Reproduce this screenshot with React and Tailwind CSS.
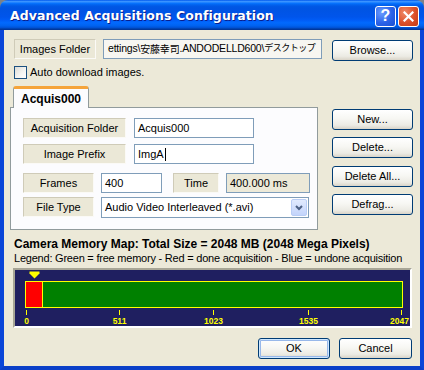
import React from "react";

const btn =
  "flex items-center justify-center rounded-[3px] border border-[#003c74] bg-[linear-gradient(180deg,#ffffff_0%,#f7f7f3_45%,#ecebe4_80%,#d9d4c8_100%)] text-[11px] text-black";

function Label({ w, children }) {
  return (
    <div
      className={`flex h-[20px] ${w} items-center justify-center border border-[#cfcbb8] border-b-[#fbfaf6] border-r-[#fbfaf6] bg-[#ebe8d7] text-[11px]`}
    >
      {children}
    </div>
  );
}

function Field({ w, children, className = "" }) {
  return (
    <div
      className={`flex h-[20px] ${w} items-center border border-[#7f9db9] bg-white px-[3px] text-[11px] ${className}`}
    >
      {children}
    </div>
  );
}

function MemoryMap() {
  const ticks = [
    { x: 11, t: "0" },
    { x: 104, t: "511" },
    { x: 198, t: "1023" },
    { x: 293, t: "1535" },
    { x: 386, t: "2047" },
  ];
  return (
    <svg width="395" height="56" viewBox="0 0 395 56">
      <rect x="0" y="0" width="395" height="56" fill="#1f1f60" />
      <polygon points="14.5,1.5 24.5,1.5 24.5,3.5 19.5,8.5 14.5,3.5" fill="#ffff00" />
      <rect x="10.5" y="11.5" width="377" height="26" fill="#008000" stroke="#ffff00" />
      <rect x="10.5" y="11.5" width="17" height="26" fill="#ff0000" stroke="#ffff00" />
      {ticks.map((k) => (
        <g key={k.t}>
          <rect x={k.x} y="40" width="1" height="5" fill="#ffff00" />
          <text
            x={k.t === "2047" ? 394 : k.x + 0.5}
            y="54"
            textAnchor={k.t === "2047" ? "end" : "middle"}
            fill="#ffff00"
            fontSize="8.5"
            fontWeight="bold"
            fontFamily="'Liberation Sans', sans-serif"
          >
            {k.t}
          </text>
        </g>
      ))}
    </svg>
  );
}

export default function App() {
  return (
    <div className="h-[370px] w-[424px] bg-[#7d8288] font-['Liberation_Sans','Noto_Sans_CJK_JP',sans-serif] text-[11px] text-black">
      <div className="flex h-full flex-col overflow-hidden rounded-t-[8px]">
        {/* Title bar */}
        <div className="flex h-[30px] shrink-0 items-center bg-[linear-gradient(180deg,#0058ee_0%,#3a93ff_5%,#1c80ff_9%,#036ffc_12%,#0262ee_16%,#0057e5_22%,#0054e3_30%,#0055eb_56%,#005bf5_66%,#026afe_76%,#0062ef_86%,#0052d6_92%,#0040ab_96%,#003092_100%)] pl-[10px] pr-[5px] pt-[2px]">
          <span className="font-['DejaVu_Sans',sans-serif] text-[12.5px] font-bold tracking-[0.1px] text-white [text-shadow:1px_1px_0_#0a1e8c]">
            Advanced Acquisitions Configuration
          </span>
          <div className="ml-auto flex gap-[2px]">
            <div className="flex h-[21px] w-[21px] items-center justify-center rounded-[3px] border border-white bg-[radial-gradient(circle_at_30%_30%,#6b9cff_0%,#2b63e8_55%,#1c4fd1_100%)] font-['Liberation_Sans',sans-serif] text-[16px] font-bold leading-none text-white">
              ?
            </div>
            <div className="flex h-[21px] w-[21px] items-center justify-center rounded-[3px] border border-white bg-[radial-gradient(circle_at_30%_30%,#f08a68_0%,#dc4f28_55%,#c23b16_100%)]">
              <svg width="11" height="11" viewBox="0 0 11 11">
                <path d="M1.5 1.5 L9.5 9.5 M9.5 1.5 L1.5 9.5" stroke="white" strokeWidth="2.2" strokeLinecap="square" />
              </svg>
            </div>
          </div>
        </div>

        {/* Client area */}
        <div className="flex flex-1 flex-col border-x-4 border-b-4 border-x-[#0a46d8] border-b-[#0a3fc8] bg-[#ece9d8] pl-[6px] pr-[7px] pt-[9px]">
          {/* Images folder row */}
          <div className="flex items-start">
            <div className="ml-[4px]">
              <Label w="w-[82px]">Images Folder</Label>
            </div>
            <div className="ml-[7px] flex h-[20px] w-[219px] items-center overflow-hidden whitespace-nowrap border border-[#7f9db9] bg-[#f7f6f1] pl-[4px] text-[10.5px] tracking-[-0.2px]">
              ettings\<span className="text-[10px]">安藤幸司</span>.ANDODELLD600\<span className="text-[9px] tracking-[-0.5px]">デスクトップ</span>
            </div>
            <div className={`${btn} ml-[10px] mt-[1px] h-[21px] w-[81px]`}>Browse...</div>
          </div>

          {/* Checkbox */}
          <div className="ml-[4px] mt-[4px] flex items-center">
            <div className="h-[13px] w-[13px] border border-[#1c5180] bg-[linear-gradient(135deg,#dcdcd7_0%,#f6f6f3_60%,#ffffff_100%)]" />
            <span className="ml-[3px] text-[11px] leading-[14px]">Auto download images.</span>
          </div>

          {/* Tab + side buttons */}
          <div className="mt-[7px] flex">
            <div className="flex w-[308px] flex-col">
              <div className="flex h-[22px]">
                <div className="relative z-10 ml-[3px] flex h-[22px] w-[76px] items-center rounded-t-[3px] border-x border-[#919b9c] border-t-[3px] border-t-[#f5a43a] bg-[#fcfcfe] pl-[7px] text-[12px] font-bold">
                  Acquis000
                </div>
              </div>
              <div className="-mt-[1px] flex h-[123px] flex-col border border-[#919b9c] bg-[#fcfcfe] pl-[12px] pt-[10px]">
                <div className="flex">
                  <Label w="w-[103px]">Acquisition Folder</Label>
                  <Field w="ml-[8px] w-[120px]">Acquis000</Field>
                </div>
                <div className="mt-[6px] flex">
                  <Label w="w-[103px]">Image Prefix</Label>
                  <Field w="ml-[8px] w-[120px]">
                    ImgA<span className="ml-[1px] h-[13px] w-[1px] bg-black" />
                  </Field>
                </div>
                <div className="mt-[9px] flex">
                  <Label w="w-[71px]">Frames</Label>
                  <Field w="ml-[7px] w-[61px]">400</Field>
                  <div className="ml-[11px]">
                    <Label w="w-[46px]">Time</Label>
                  </div>
                  <Field w="ml-[7px] w-[84px]" className="!bg-[#ece9d8]">
                    400.000 ms
                  </Field>
                </div>
                <div className="mt-[4px] flex">
                  <Label w="w-[71px]">File Type</Label>
                  <div className="ml-[7px] flex h-[21px] w-[208px] items-center border border-[#7f9db9] bg-white pl-[3px] pr-[1px] text-[11px]">
                    <span>Audio Video Interleaved (*.avi)</span>
                    <div className="ml-auto flex h-[17px] w-[16px] items-center justify-center rounded-[2px] border border-[#b9cdf6] bg-[linear-gradient(180deg,#e1eafe_0%,#c3d4fb_100%)]">
                      <svg width="8" height="6" viewBox="0 0 8 6">
                        <path d="M1 1 L4 4 L7 1" fill="none" stroke="#4d6185" strokeWidth="2" />
                      </svg>
                    </div>
                  </div>
                </div>
              </div>
            </div>
            <div className="ml-[14px] flex flex-col pt-[23px]">
              <div className={`${btn} h-[21px] w-[81px]`}>New...</div>
              <div className={`${btn} mt-[7px] h-[21px] w-[81px]`}>Delete...</div>
              <div className={`${btn} mt-[8px] h-[21px] w-[81px]`}>Delete All...</div>
              <div className={`${btn} mt-[7px] h-[21px] w-[81px]`}>Defrag...</div>
            </div>
          </div>

          {/* Memory map */}
          <div className="ml-[4px] mt-[7px] text-[12px] font-bold leading-[14px]">
            Camera Memory Map: Total Size = 2048 MB (2048 Mega Pixels)
          </div>
          <div className="ml-[4px] whitespace-nowrap text-[11px] leading-[14px] tracking-[-0.22px]">
            Legend: Green = free memory - Red = done acquisition - Blue = undone acquisition
          </div>
          <div className="ml-[3px] mt-[3px] h-[60px] w-[399px] border-2 border-[#a7a596] border-b-white border-r-white">
            <MemoryMap />
          </div>

          {/* OK / Cancel */}
          <div className="mt-[10px] flex justify-end gap-[9px] pr-[1px]">
            <div className={`${btn} h-[21px] w-[72px] shadow-[inset_0_0_0_1px_#cee7ff,inset_0_0_0_2px_#98b8ea]`}>OK</div>
            <div className={`${btn} h-[21px] w-[73px]`}>Cancel</div>
          </div>
        </div>
      </div>
    </div>
  );
}
